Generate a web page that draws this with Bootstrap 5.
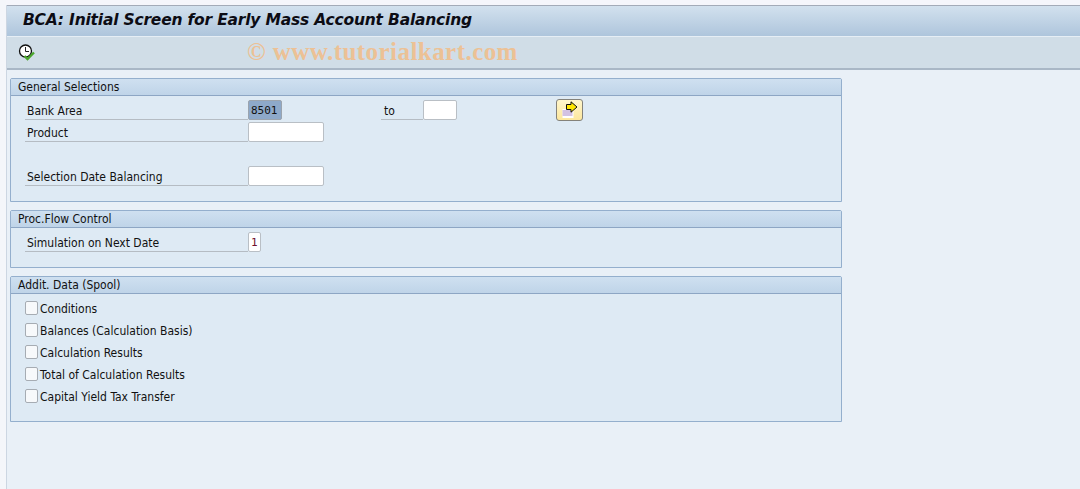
<!DOCTYPE html>
<html lang="en">
<head>
<meta charset="utf-8">
<title>BCA: Initial Screen for Early Mass Account Balancing</title>
<link href="https://cdn.jsdelivr.net/npm/bootstrap@5.3.0/dist/css/bootstrap.min.css" rel="stylesheet">
<style>
html,body{height:489px;overflow:hidden}
body{background:#e9f0f7;font-family:"DejaVu Sans","Noto Sans",sans-serif;font-stretch:condensed;font-size:12px;line-height:20px;color:#111}
.sap-shell{height:489px;margin-left:6px;border-left:1px solid #ccd6e2;padding-top:5px;background:#e9f0f7}
.sap-edge{position:absolute;left:0;top:0;width:6px;height:489px;background:#f4f6fa}
.sap-top{position:absolute;left:0;top:0;right:0;height:5px;background:#f5f6fb}
.sap-title{height:32px;border-top:1px solid #a3abb8;background:linear-gradient(#d2e1ee,#aec5dc);border-bottom:1px solid #e6eef5;padding-left:16px;font:italic 700 15.5px/29px "DejaVu Sans","Open Sans",sans-serif;font-stretch:normal;letter-spacing:-.2px;color:#0c0c14}
.sap-tools{height:33px;background:#d0dde7;border-bottom:2px solid #a9b7c6;padding-left:11px}
.sap-wm{font:700 25px/30px "Liberation Serif",serif;font-stretch:normal;color:#ecc195;margin-left:211px;letter-spacing:.45px;margin-top:-1px}
.sap-group{width:832px;margin:0 0 8px 3px;border:1px solid #94afcd;border-radius:2px 2px 0 0;background:#deeaf4}
.sap-head{height:17px;background:linear-gradient(#cfe0f0,#bfd4e8);border-bottom:1px solid #8da6c4;padding-left:7px;line-height:17px}
.sap-row{height:20px;margin-bottom:2px;margin-left:14px}
.sap-label{width:223px;height:20px;border-bottom:1px solid #b5bcc3;padding-left:2px;line-height:23px;flex:none}
.sap-input{height:20px;background:#fff;border:1px solid #b9bfc5;border-radius:2px;flex:none;font:11px/20px "DejaVu Sans Mono",monospace;font-stretch:normal;padding-left:2px;color:#222}
.w-76{width:76px}.w-34{width:34px}.w-13{width:13px}
.sap-sel{background:#8ea9c9;color:#111;border-color:#9ba4ae}
.sap-to{width:42px;margin-left:99px;height:20px;border-bottom:1px solid #b5bcc3;padding-left:3px;flex:none;line-height:23px}
.sap-btn{width:27px;height:22px;margin:-1px 0 0 99px;padding:0;background:linear-gradient(#fff6cc,#fde79d);border:1px solid #84827a;border-radius:3px;flex:none;line-height:0}
.sap-check{height:20px;margin:0 0 2px 14px}
.sap-box{width:13px;height:14px;background:#f7f9fb;border:1px solid #a6acb3;border-radius:2px;margin-right:2px;margin-top:-2px;flex:none}
.sap-gap-rows{height:4px}
</style>
</head>
<body>
<div class="sap-top"></div>
<div class="sap-edge"></div>
<div class="sap-shell">
  <div class="sap-title">BCA: Initial Screen for Early Mass Account Balancing</div>
  <div class="sap-tools d-flex align-items-center">
    <svg width="18" height="18" viewBox="0 0 18 18">
      <circle cx="7.5" cy="7" r="6" fill="#fff" stroke="#111" stroke-width="1.3"/>
      <path d="M7.5 3V7.5H11" fill="none" stroke="#222" stroke-width="1"/>
      <path d="M6.5 12 9.5 15 16 8.5" fill="none" stroke="#4aa52c" stroke-width="2.4"/>
    </svg>
    <div class="sap-wm">© www.tutorialkart.com</div>
  </div>
  <div style="height:8px"></div>
  <section class="sap-group" style="height:124px">
    <div class="sap-head">General Selections</div>
    <div class="sap-gap-rows"></div>
    <div class="sap-row d-flex">
      <div class="sap-label">Bank Area</div>
      <div class="sap-input w-34 sap-sel">8501</div>
      <div class="sap-to">to</div>
      <div class="sap-input w-34"></div>
      <button class="sap-btn" type="button" aria-label="Multiple selection">
        <svg width="20" height="18" viewBox="0 0 20 18">
          <rect x="2.5" y="8" width="11" height="9" fill="#fff"/>
          <rect x="2.5" y="9" width="10" height="6" fill="#d3c2e3"/>
          <path d="M6.5 3.5H11V.8L17 6 11 11.2V8.5H6.5Z" fill="#ffe600" stroke="#111" stroke-width="1"/>
        </svg>
      </button>
    </div>
    <div class="sap-row d-flex">
      <div class="sap-label">Product</div>
      <div class="sap-input w-76"></div>
    </div>
    <div class="sap-row"></div>
    <div class="sap-row d-flex">
      <div class="sap-label">Selection Date Balancing</div>
      <div class="sap-input w-76"></div>
    </div>
  </section>
  <section class="sap-group" style="height:58px">
    <div class="sap-head">Proc.Flow Control</div>
    <div class="sap-gap-rows"></div>
    <div class="sap-row d-flex">
      <div class="sap-label">Simulation on Next Date</div>
      <div class="sap-input w-13" style="color:#701030">1</div>
    </div>
  </section>
  <section class="sap-group" style="height:146px">
    <div class="sap-head">Addit. Data (Spool)</div>
    <div style="height:5px"></div>
    <div class="sap-check d-flex align-items-center"><span class="sap-box"></span>Conditions</div>
    <div class="sap-check d-flex align-items-center"><span class="sap-box"></span>Balances (Calculation Basis)</div>
    <div class="sap-check d-flex align-items-center"><span class="sap-box"></span>Calculation Results</div>
    <div class="sap-check d-flex align-items-center"><span class="sap-box"></span>Total of Calculation Results</div>
    <div class="sap-check d-flex align-items-center"><span class="sap-box"></span>Capital Yield Tax Transfer</div>
  </section>
</div>
<script src="https://cdn.jsdelivr.net/npm/bootstrap@5.3.0/dist/js/bootstrap.bundle.min.js"></script>
</body>
</html>
